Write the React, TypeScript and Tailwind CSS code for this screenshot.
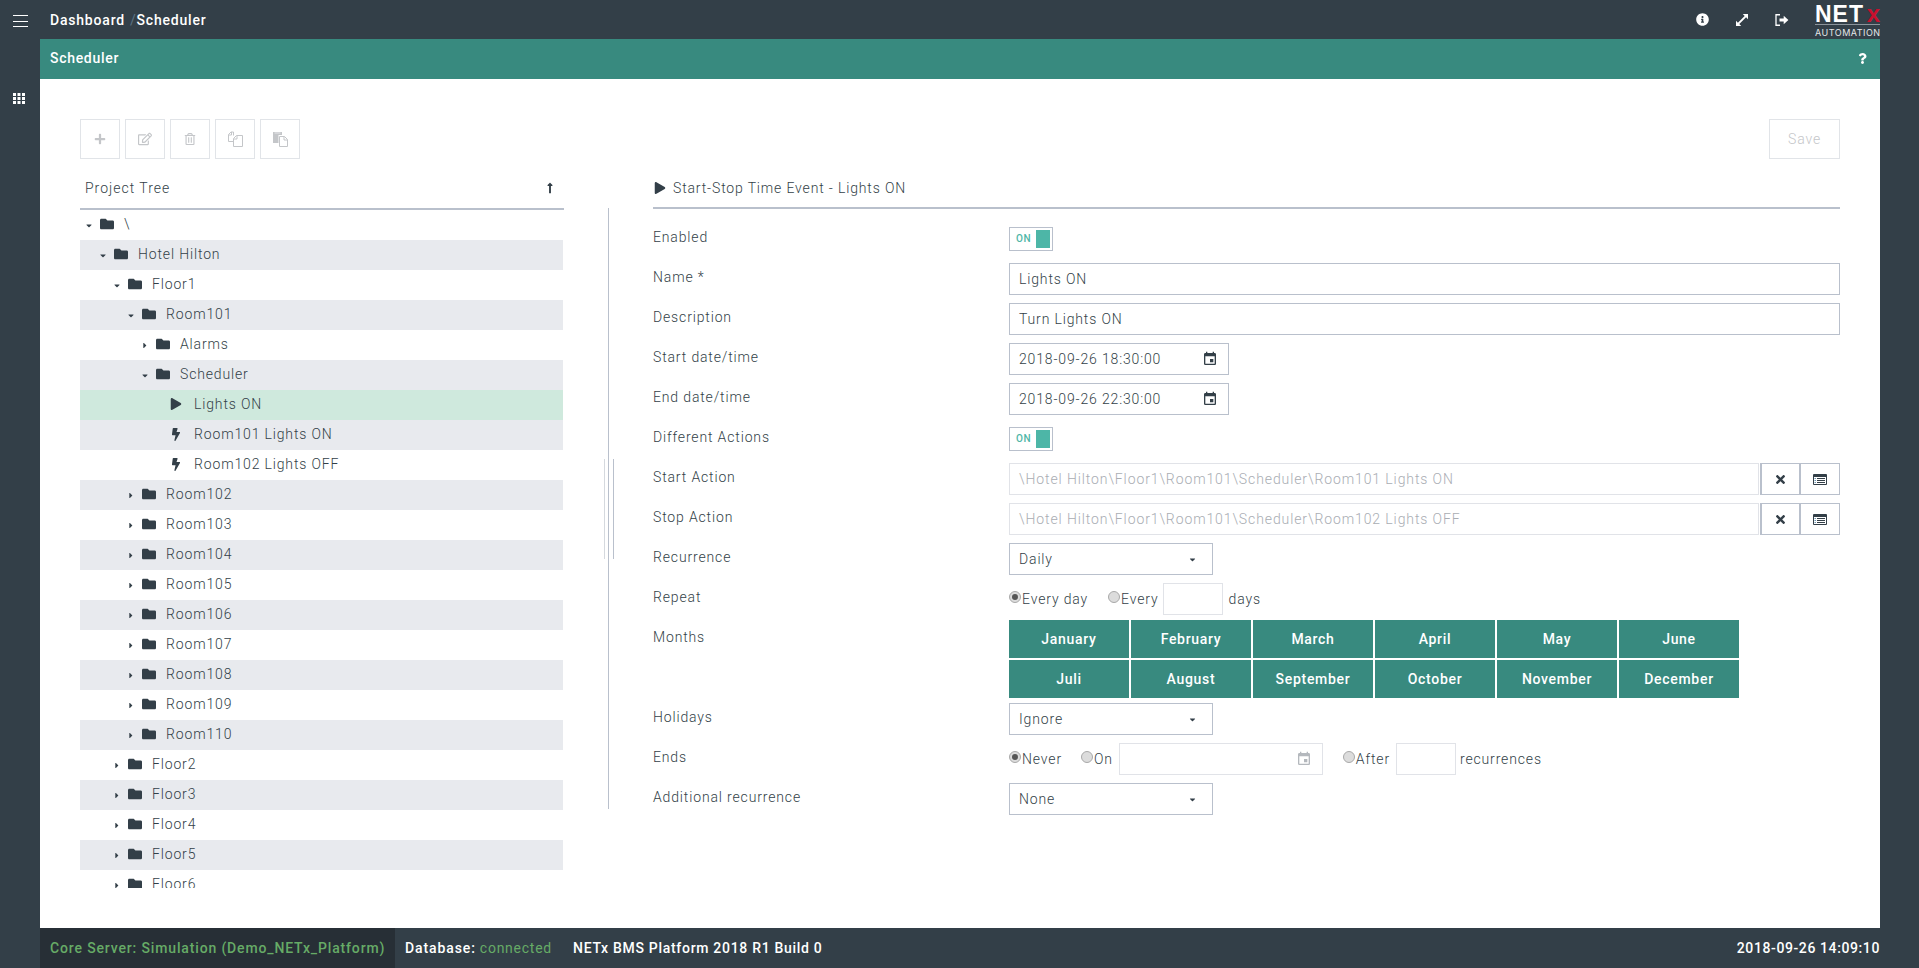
import { type ReactNode } from "react"
import {
  FaBolt,
  FaCaretDown,
  FaCaretRight,
  FaFolder,
  FaInfoCircle,
  FaLongArrowAltUp,
  FaPlay,
  FaPlus,
  FaQuestion,
  FaRegEdit,
  FaRegTrashAlt,
  FaTimes,
} from "react-icons/fa"
import { MdEvent } from "react-icons/md"

type TreeRow = {
  label: string
  level: number
  kind: "open" | "closed" | "play" | "bolt"
}

const TREE: TreeRow[] = [
  { label: "\\", level: 0, kind: "open" },
  { label: "Hotel Hilton", level: 1, kind: "open" },
  { label: "Floor1", level: 2, kind: "open" },
  { label: "Room101", level: 3, kind: "open" },
  { label: "Alarms", level: 4, kind: "closed" },
  { label: "Scheduler", level: 4, kind: "open" },
  { label: "Lights ON", level: 5, kind: "play" },
  { label: "Room101 Lights ON", level: 5, kind: "bolt" },
  { label: "Room102 Lights OFF", level: 5, kind: "bolt" },
  { label: "Room102", level: 3, kind: "closed" },
  { label: "Room103", level: 3, kind: "closed" },
  { label: "Room104", level: 3, kind: "closed" },
  { label: "Room105", level: 3, kind: "closed" },
  { label: "Room106", level: 3, kind: "closed" },
  { label: "Room107", level: 3, kind: "closed" },
  { label: "Room108", level: 3, kind: "closed" },
  { label: "Room109", level: 3, kind: "closed" },
  { label: "Room110", level: 3, kind: "closed" },
  { label: "Floor2", level: 2, kind: "closed" },
  { label: "Floor3", level: 2, kind: "closed" },
  { label: "Floor4", level: 2, kind: "closed" },
  { label: "Floor5", level: 2, kind: "closed" },
  { label: "Floor6", level: 2, kind: "closed" },
]

const MONTHS = [
  "January",
  "February",
  "March",
  "April",
  "May",
  "June",
  "Juli",
  "August",
  "September",
  "October",
  "November",
  "December",
]

function SignOutIcon() {
  return (
    <svg width="14" height="12" viewBox="0 0 14 12" fill="none" className="text-white">
      <path d="M5 .75H1v10.500h4" stroke="currentColor" strokeWidth="1.3" />
      <path d="M4.500 4.400h4.200V1.800L13.400 6 8.700 10.200V7.600H4.500z" fill="currentColor" />
    </svg>
  )
}

function ExpandIcon() {
  return (
    <svg width="14" height="14" viewBox="0 0 14 14" fill="white">
      <path d="M7.800 1H13v5.200l-1.900-1.900-6.800 6.800L6.200 13H1V7.800l1.900 1.900 6.800-6.800z" />
    </svg>
  )
}

function GridIcon() {
  return (
    <svg width="12" height="11" viewBox="0 0 12 11" fill="white">
      <path d="M0 0h3v3H0zM4.500 0h3v3h-3zM9 0h3v3H9zM0 4h3v3H0zM4.500 4h3v3h-3zM9 4h3v3H9zM0 8h3v3H0zM4.500 8h3v3h-3zM9 8h3v3H9z" />
    </svg>
  )
}

function FilesIcon() {
  return (
    <svg width="15" height="16" viewBox="0 0 15 16" fill="none" stroke="currentColor" strokeWidth="1">
      <path d="M5.500 4.500V1H3L.5 3.500V10.500H5.500" />
      <path d="M.5 4H3.500V1" />
      <path d="M5.500 15.500V7.500L8.500 4.500H14.500V15.500Z" fill="white" />
      <path d="M5.500 8H9V4.500" />
    </svg>
  )
}

function PasteIcon() {
  return (
    <svg width="15" height="16" viewBox="0 0 15 16" fill="currentColor">
      <path d="M0 1h9v3H5.500v8H0z" />
      <path d="M1.500 1.500h6v1h-6z" fill="#e8e9ea" />
      <path d="M6.500 5.500h5l3 3v7h-8z" fill="white" stroke="currentColor" />
      <path d="M11 5.500V9h3.500" fill="none" stroke="currentColor" />
    </svg>
  )
}

function ListWindowIcon() {
  return (
    <svg width="14" height="11" viewBox="0 0 14 11">
      <rect width="14" height="11" rx="1" fill="#333f48" />
      <rect x="1" y="3" width="12" height="7" fill="white" />
      <path d="M4 4.500h8M4 6.500h8M4 8.500h8" stroke="#333f48" />
      <path d="M1.500 4.500h1.500M1.500 6.500h1.500M1.500 8.500h1.500" stroke="#6f98b5" />
    </svg>
  )
}

function Logo() {
  return (
    <div className="w-[65px] shrink-0 pt-[1.5px] text-white">
      <div className="-mb-[2px] flex items-baseline justify-between font-['Liberation_Sans',sans-serif] text-[23px] leading-[24px] font-bold">
        <span className="tracking-[1px]">NET</span>
        <span className="text-[24px] leading-[24px] tracking-normal text-[#c8102e]">x</span>
      </div>
      <div className="h-[1.500px] bg-[#8b949b]" />
      <div className="mt-[2.500px] font-['Inter',sans-serif] text-[9px] leading-[9px] font-normal tracking-[0.5px] whitespace-nowrap text-[#e5e7e9]">
        AUTOMATION
      </div>
    </div>
  )
}

function ToolButton({ children }: { children: ReactNode }) {
  return (
    <button
      type="button"
      className="flex h-10 w-10 items-center justify-center border-[1.5px] border-[#e1e4e8] bg-white text-[#c4c6c9]"
    >
      {children}
    </button>
  )
}

function ProjectTree() {
  return (
    <div className="h-[678px] w-[483px] overflow-hidden">
      {TREE.map((row, index) => {
        const selected = row.label === "Lights ON"
        const background = selected ? "bg-[#cfe9dd]" : index % 2 === 1 ? "bg-[#e8eaee]" : "bg-white"
        return (
          <div
            key={row.label}
            className={`flex h-[30px] shrink-0 items-center pb-[2px] ${background}`}
            style={{ paddingLeft: 5 + row.level * 14 }}
          >
            <span className="flex w-[8px] justify-center pt-[3px] text-[#333f48]">
              {row.kind === "open" ? <FaCaretDown size={9} /> : null}
              {row.kind === "closed" ? <FaCaretRight size={9} /> : null}
            </span>
            {row.kind === "open" || row.kind === "closed" ? (
              <>
                <span className="ml-[7px] w-[14px] text-[#333f48]">
                  <FaFolder size={14} />
                </span>
                <span className="ml-[10px]">{row.label}</span>
              </>
            ) : (
              <>
                <span className="ml-[7px] flex w-[12px] justify-center text-[#333f48]">
                  {row.kind === "play" ? <FaPlay size={12} /> : <FaBolt size={13} />}
                </span>
                <span className="ml-[12px]">{row.label}</span>
              </>
            )}
          </div>
        )
      })}
    </div>
  )
}

function FormRow({ label, children }: { label: string; children: ReactNode }) {
  return (
    <div className="flex min-h-10">
      <div className="flex h-9 w-[356px] shrink-0 items-center">{label}</div>
      <div className="flex min-w-0 flex-1 items-center">{children}</div>
    </div>
  )
}

function Toggle() {
  return (
    <div className="flex h-6 w-11 items-center justify-between border border-[#b9c0cc] pr-[2px] pl-[6px]">
      <span className="text-[10px] font-medium tracking-[0.5px] text-[#4db6a7]">ON</span>
      <span className="h-[18px] w-[14px] bg-[#4db6a7]" />
    </div>
  )
}

function TextBox({ value, width = "w-full", muted = false }: { value?: string; width?: string; muted?: boolean }) {
  return (
    <div
      className={`flex h-8 items-center border px-[9px] ${width} ${
        muted ? "border-[#e1e3e8] tracking-[0.9px] text-[#a9adb3]" : "border-[#b9c0cc]"
      }`}
    >
      {value}
    </div>
  )
}

function DateBox({ value }: { value: string }) {
  return (
    <div className="flex h-8 w-[220px] items-center justify-between border border-[#b9c0cc] pr-[10px] pl-[9px]">
      <span>{value}</span>
      <MdEvent size={16} className="text-[#333f48]" />
    </div>
  )
}

function ActionBox({ value }: { value: string }) {
  return (
    <div className="flex w-full">
      <TextBox value={value} muted width="flex-1" />
      <button
        type="button"
        className="ml-px flex h-8 w-10 items-center justify-center border border-l-2 border-[#b9c0cc] text-[#333f48]"
      >
        <FaTimes size={13} />
      </button>
      <button type="button" className="flex h-8 w-10 items-center justify-center border border-[#b9c0cc]">
        <ListWindowIcon />
      </button>
    </div>
  )
}

function SelectBox({ value }: { value: string }) {
  return (
    <div className="flex h-8 w-[204px] items-center justify-between border border-[#b9c0cc] pr-[15px] pl-[9px]">
      <span>{value}</span>
      <FaCaretDown size={9} className="text-[#333f48]" />
    </div>
  )
}

function Radio({ checked = false }: { checked?: boolean }) {
  return (
    <span className="mb-[5px] flex h-3 w-3 shrink-0 items-center justify-center rounded-full border border-[#a9a9a9] bg-[#dcdcdc]">
      {checked ? <span className="h-[6px] w-[6px] rounded-full bg-[#555]" /> : null}
    </span>
  )
}

function SmallBox({ children, width }: { children?: ReactNode; width: string }) {
  return <div className={`flex h-8 items-center justify-end border border-[#e1e3e8] pr-[10px] ${width}`}>{children}</div>
}

function SchedulerForm() {
  return (
    <div className="mt-[10px]">
      <FormRow label="Enabled">
        <Toggle />
      </FormRow>
      <FormRow label="Name *">
        <TextBox value="Lights ON" />
      </FormRow>
      <FormRow label="Description">
        <TextBox value="Turn Lights ON" />
      </FormRow>
      <FormRow label="Start date/time">
        <DateBox value="2018-09-26 18:30:00" />
      </FormRow>
      <FormRow label="End date/time">
        <DateBox value="2018-09-26 22:30:00" />
      </FormRow>
      <FormRow label="Different Actions">
        <Toggle />
      </FormRow>
      <FormRow label="Start Action">
        <ActionBox value="\Hotel Hilton\Floor1\Room101\Scheduler\Room101 Lights ON" />
      </FormRow>
      <FormRow label="Stop Action">
        <ActionBox value="\Hotel Hilton\Floor1\Room101\Scheduler\Room102 Lights OFF" />
      </FormRow>
      <FormRow label="Recurrence">
        <SelectBox value="Daily" />
      </FormRow>
      <FormRow label="Repeat">
        <Radio checked />
        <span className="ml-px">Every day</span>
        <span className="ml-[20px]">
          <Radio />
        </span>
        <span className="ml-px">Every</span>
        <span className="ml-[4px]">
          <SmallBox width="w-[60px]" />
        </span>
        <span className="ml-[6px]">days</span>
      </FormRow>
      <FormRow label="Months">
        <div className="grid grid-cols-[repeat(6,120px)] gap-[2px] pt-px pb-px">
          {MONTHS.map((month) => (
            <button
              key={month}
              type="button"
              className="h-[38px] bg-[#388a7f] pb-px font-medium tracking-[0.7px] text-white"
            >
              {month}
            </button>
          ))}
        </div>
      </FormRow>
      <FormRow label="Holidays">
        <SelectBox value="Ignore" />
      </FormRow>
      <FormRow label="Ends">
        <Radio checked />
        <span className="ml-px">Never</span>
        <span className="ml-[19px]">
          <Radio />
        </span>
        <span className="ml-px">On</span>
        <span className="ml-[6px]">
          <SmallBox width="w-[204px]">
            <MdEvent size={16} className="text-[#b4b8bd]" />
          </SmallBox>
        </span>
        <span className="ml-[20px]">
          <Radio />
        </span>
        <span className="ml-px">After</span>
        <span className="ml-[6px]">
          <SmallBox width="w-[60px]" />
        </span>
        <span className="ml-[4px]">recurrences</span>
      </FormRow>
      <FormRow label="Additional recurrence">
        <SelectBox value="None" />
      </FormRow>
    </div>
  )
}

export default function App() {
  return (
    <div className="flex h-[968px] flex-col overflow-hidden bg-[#333f48] font-['Roboto',sans-serif] text-[14px] leading-5 font-light tracking-[0.85px] text-[#333f48]">
      <header className="flex h-[39px] shrink-0 items-center text-white">
        <button type="button" className="flex w-10 flex-col items-center gap-[4.500px] pt-[3px]">
          <span className="h-px w-[15px] bg-white" />
          <span className="h-px w-[15px] bg-white" />
          <span className="h-px w-[15px] bg-white" />
        </button>
        <div className="ml-[10px] flex flex-1 items-center font-medium tracking-[0.8px]">
          <span>Dashboard</span>
          <span className="ml-[5px] font-normal text-[#5d7384]">/</span>
          <span>Scheduler</span>
        </div>
        <div className="flex items-center">
          <span className="flex w-10 justify-center">
            <FaInfoCircle size={13} />
          </span>
          <span className="flex w-10 justify-center">
            <ExpandIcon />
          </span>
          <span className="flex w-10 justify-center">
            <SignOutIcon />
          </span>
        </div>
        <div className="mr-[39px] ml-[13px] self-start">
          <Logo />
        </div>
      </header>

      <div className="flex min-h-0 flex-1">
        <aside className="w-10 shrink-0 pt-[54px] pl-[13px]">
          <GridIcon />
        </aside>
        <div className="flex min-w-0 flex-1 flex-col">
          <div className="flex h-10 shrink-0 items-center justify-between bg-[#388a7f] pr-[12px] pb-[2px] pl-[10px] font-medium tracking-[0.7px] text-white">
            <span>Scheduler</span>
            <FaQuestion size={11} />
          </div>
          <main className="flex-1 bg-white px-10 pt-10">
            <div className="flex h-10 justify-between">
              <div className="flex gap-[5px]">
                <ToolButton>
                  <FaPlus size={12} />
                </ToolButton>
                <ToolButton>
                  <FaRegEdit size={14} />
                </ToolButton>
                <ToolButton>
                  <FaRegTrashAlt size={12} />
                </ToolButton>
                <ToolButton>
                  <FilesIcon />
                </ToolButton>
                <ToolButton>
                  <PasteIcon />
                </ToolButton>
              </div>
              <button
                type="button"
                className="h-10 w-[71px] border-[1.5px] border-[#e1e4e8] text-[#c4c6c9]"
              >
                Save
              </button>
            </div>

            <div className="flex">
              <section className="w-[484px] shrink-0">
                <div className="flex h-[51px] items-center justify-between border-b-2 border-[#b9c0cc] pt-[9px] pr-[8px] pl-[5px]">
                  <span className="tracking-[1px]">Project Tree</span>
                  <FaLongArrowAltUp size={12} />
                </div>
                <ProjectTree />
              </section>

              <div className="relative w-[89px] shrink-0">
                <div className="mt-[49px] ml-[44px] h-[601px] w-px bg-[#b9c0cc]" />
                <div className="absolute top-[300px] left-[40px] h-[100px] w-px bg-[#d5d9de]" />
                <div className="absolute top-[300px] left-[49px] h-[100px] w-px bg-[#b9c0cc]" />
              </div>

              <section className="min-w-0 flex-1">
                <div className="flex h-[50px] items-center gap-[7px] border-b-2 border-[#b9c0cc] pt-[10px] pl-px">
                  <FaPlay size={12} />
                  <span>Start-Stop Time Event - Lights ON</span>
                </div>
                <SchedulerForm />
              </section>
            </div>
          </main>
        </div>
        <div className="w-[39px] shrink-0" />
      </div>

      <footer className="flex h-10 shrink-0 items-center pr-[39px] pl-10 text-white">
        <div className="flex h-full w-[355px] items-center bg-[#272f36] pl-[10px] font-medium tracking-[0.85px] text-[#66ab66]">
          Core Server: Simulation (Demo_NETx_Platform)
        </div>
        <span className="ml-[10px] font-medium tracking-[0.9px]">Database:</span>
        <span className="ml-[4px] font-normal tracking-[0.75px] text-[#66ab66]">connected</span>
        <span className="ml-[21px] font-medium tracking-[0.7px]">NETx BMS Platform 2018 R1 Build 0</span>
        <span className="ml-auto font-medium tracking-[0.6px]">2018-09-26 14:09:10</span>
      </footer>
    </div>
  )
}
